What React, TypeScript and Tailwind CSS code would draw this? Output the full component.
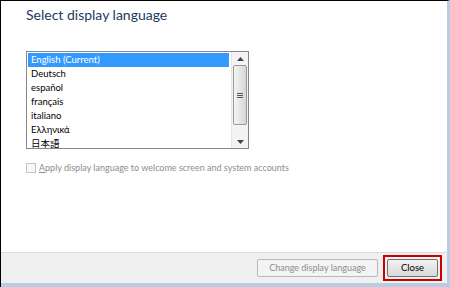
import React from "react";

const languages = [
  "English (Current)",
  "Deutsch",
  "español",
  "français",
  "italiano",
  "Ελληνικά",
  "日本語",
];

function ScrollBar() {
  return (
    <div className="w-[17px] flex flex-col bg-[#f3f3f3] border-l border-[#e4e4e4]">
      <div className="h-[13px] flex items-center justify-center">
        <svg width="7" height="4" viewBox="0 0 7 4">
          <path d="M0 4 L3.5 0 L7 4 Z" fill="#444" />
        </svg>
      </div>
      <div className="mx-[1px] h-[60px] rounded-[2px] border border-[#9a9a9a] bg-gradient-to-r from-[#f4f4f4] to-[#d6d6d6] flex items-center justify-center">
        <div className="flex flex-col gap-[1px]">
          <div className="w-[6px] h-[1px] bg-[#555]" />
          <div className="w-[6px] h-[1px] bg-[#555]" />
          <div className="w-[6px] h-[1px] bg-[#555]" />
        </div>
      </div>
      <div className="flex-1" />
      <div className="h-[13px] flex items-center justify-center">
        <svg width="7" height="4" viewBox="0 0 7 4">
          <path d="M0 0 L3.5 4 L7 0 Z" fill="#444" />
        </svg>
      </div>
    </div>
  );
}

export default function App() {
  return (
    <div
      className="w-[450px] h-[287px] flex flex-col bg-white border-t border-l border-black border-r-[3px] border-r-[#b9cde2] overflow-hidden"
      style={{ fontFamily: 'Lato, "Noto Sans CJK JP", sans-serif' }}>
      {/* Main Content */}
      <div className="flex-1 pl-[25px] pt-[4px]">
        <h1 className="text-[14px] leading-[20px] text-[#1e3a5f]">
          Select display language
        </h1>

        <div className="mt-[26px] w-[223px] h-[98px] border border-[#828790] flex">
          <div className="flex-1 pt-[1px] pl-[1px] pr-[2px]">
            {languages.map((lang, i) => (
              <div
                key={lang}
                className={
                  i === 0
                    ? "h-[14px] leading-[14px] text-[9.5px] pl-[3px] bg-[#3399ff] text-white"
                    : "h-[14px] leading-[14px] text-[9.5px] pl-[3px] text-black"
                }>
                {lang}
              </div>
            ))}
          </div>
          <ScrollBar />
        </div>

        {/* Checkbox */}
        <div className="mt-[12px] flex items-center gap-[3px]">
          <div className="w-[10px] h-[10px] border border-[#c2c2c2] bg-[#f7f7f7]" />
          <span className="text-[9px] text-[#8d8d8d]">
            <span className="underline">A</span>pply display language to welcome
            screen and system accounts
          </span>
        </div>
      </div>

      {/* Footer */}
      <div className="h-[31px] bg-[#f0f0f0] border-t border-[#dcdcdc] flex items-center justify-end pr-[5px] gap-[5px]">
        <div className="w-[121px] h-[18px] border border-[#b8b8b8] rounded-[2px] bg-[#f4f4f4] flex items-center justify-center text-[9px] text-[#8d8d8d]">
          Change display language
        </div>
        <div className="border-[2px] border-[#c80000] p-[2px]">
          <div className="w-[51px] h-[18px] border border-[#707070] rounded-[2px] bg-gradient-to-b from-[#f2f2f2] to-[#d9d9d9] flex items-center justify-center text-[9.5px] text-black">
            Close
          </div>
        </div>
      </div>
      <div className="h-[4px] bg-[#b9cde2]" />
    </div>
  );
}
